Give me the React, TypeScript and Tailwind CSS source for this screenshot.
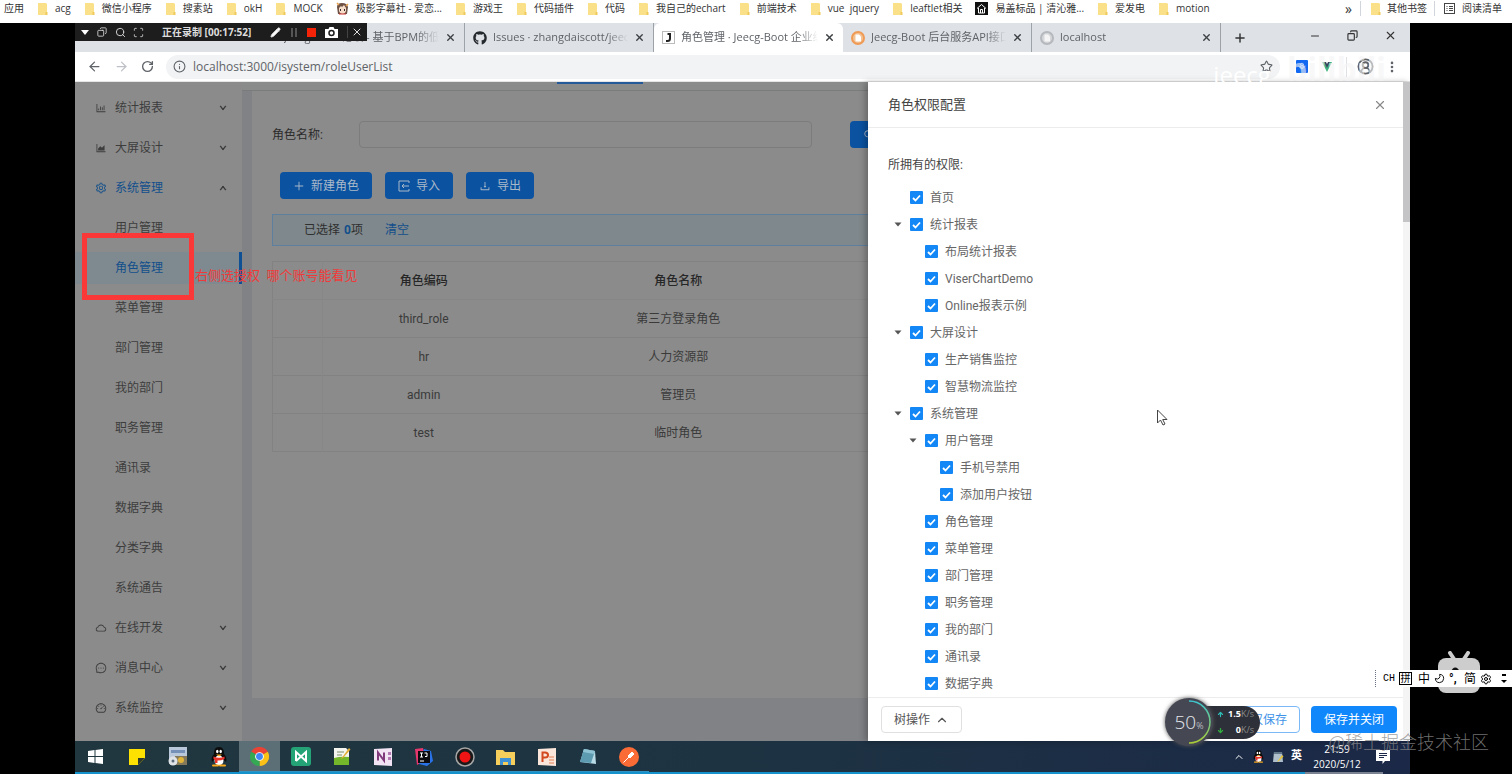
import type { ReactNode } from 'react';
import {
  AiOutlineBarChart, AiOutlineAreaChart, AiOutlineSetting, AiOutlineCloud, AiOutlineMessage, AiOutlineDashboard,
  AiOutlineDownload, AiOutlineSearch, AiOutlinePlus, AiOutlineDown, AiOutlineUp,
} from 'react-icons/ai';
import { FaGithub } from 'react-icons/fa';
import {
  X, Plus, Minus, Copy, ArrowLeft, ArrowRight, RotateCw, Info, Star, EllipsisVertical, ChevronUp, Search,
  Scan, Pencil, Camera, Moon, Settings, ArrowUp, ArrowDown, CircleUserRound, MessageSquareText,
} from 'lucide-react';

type Bookmark = { label: string; icon?: 'face' | 'house' };
type TreeItem = { id: string; label: string; level: 0 | 1 | 2; open?: boolean };

const bookmarks: Bookmark[] = [
  { label: 'acg' },
  { label: '微信小程序' },
  { label: '搜素站' },
  { label: 'okH' },
  { label: 'MOCK' },
  { label: '极影字幕社 - 爱恋...', icon: 'face' },
  { label: '游戏王' },
  { label: '代码插件' },
  { label: '代码' },
  { label: '我自己的echart' },
  { label: '前端技术' },
  { label: 'vue  jquery' },
  { label: 'leaftlet相关' },
  { label: '易盖标品 | 清沁雅...', icon: 'house' },
  { label: '爱发电' },
  { label: 'motion' },
];

const menu: { label: string; icon?: ReactNode; open?: boolean; active?: boolean }[] = [
  { label: '统计报表', icon: <AiOutlineBarChart size={12} /> },
  { label: '大屏设计', icon: <AiOutlineAreaChart size={12} /> },
  { label: '系统管理', icon: <AiOutlineSetting size={12} />, open: true },
  { label: '用户管理' },
  { label: '角色管理', active: true },
  { label: '菜单管理' },
  { label: '部门管理' },
  { label: '我的部门' },
  { label: '职务管理' },
  { label: '通讯录' },
  { label: '数据字典' },
  { label: '分类字典' },
  { label: '系统通告' },
  { label: '在线开发', icon: <AiOutlineCloud size={12} /> },
  { label: '消息中心', icon: <AiOutlineMessage size={12} /> },
  { label: '系统监控', icon: <AiOutlineDashboard size={12} /> },
];

const roles = [
  { code: 'third_role', name: '第三方登录角色' },
  { code: 'hr', name: '人力资源部' },
  { code: 'admin', name: '管理员' },
  { code: 'test', name: '临时角色' },
];

const tree: TreeItem[] = [
  { id: 'home', label: '首页', level: 0 },
  { id: 'report', label: '统计报表', level: 0, open: true },
  { id: 'report-layout', label: '布局统计报表', level: 1 },
  { id: 'report-viser', label: 'ViserChartDemo', level: 1 },
  { id: 'report-online', label: 'Online报表示例', level: 1 },
  { id: 'screen', label: '大屏设计', level: 0, open: true },
  { id: 'screen-sales', label: '生产销售监控', level: 1 },
  { id: 'screen-logistics', label: '智慧物流监控', level: 1 },
  { id: 'system', label: '系统管理', level: 0, open: true },
  { id: 'user', label: '用户管理', level: 1, open: true },
  { id: 'user-phone', label: '手机号禁用', level: 2 },
  { id: 'user-add', label: '添加用户按钮', level: 2 },
  { id: 'role', label: '角色管理', level: 1 },
  { id: 'menu', label: '菜单管理', level: 1 },
  { id: 'depart', label: '部门管理', level: 1 },
  { id: 'position', label: '职务管理', level: 1 },
  { id: 'my-depart', label: '我的部门', level: 1 },
  { id: 'contacts', label: '通讯录', level: 1 },
  { id: 'dict', label: '数据字典', level: 1 },
];

const indent = { 0: 'pl-0', 1: 'pl-[15px]', 2: 'pl-[30px]' };

function Folder() {
  return (
    <svg width="11" height="12" viewBox="0 0 11 12" className="shrink-0">
      <path d="M1 0h8l1 1v11H1z" fill="#fbe08a" />
      <path d="M8.500 9h2V12h-2z" fill="#eec95c" />
    </svg>
  );
}

function FaceIcon() {
  return (
    <svg width="13" height="13" viewBox="0 0 13 13" className="shrink-0">
      <path d="M1 5Q1 1 6 1t6 4l-1 7H2z" fill="#6d5145" />
      <path d="M3 6l2-2 1 1 2-2 2 3v3q-1 3-3.500 3T3 9z" fill="#f6ddca" />
      <path d="M1 1l2 2M12 2l-2 2" stroke="#e9a24c" strokeWidth="1.500" />
      <path d="M4.500 7v2M8.500 7v2" stroke="#3b2a2a" />
      <path d="M3 12h7" stroke="#c33" />
    </svg>
  );
}

function HouseIcon() {
  return (
    <svg width="13" height="13" viewBox="0 0 13 13" className="shrink-0">
      <rect width="13" height="13" fill="#111" />
      <path d="M2 6.500L6.500 2.500 11 6.500M3.500 6v5h6V6M5.500 11V7.500h2V11" fill="none" stroke="#fff" />
    </svg>
  );
}

function BookmarkBar() {
  return (
    <nav className="h-[23px] shrink-0 bg-white pl-1 pr-[10px] pb-[6px] flex items-center text-[10px] text-[#333] whitespace-nowrap font-['Open_Sans','Noto_Sans_CJK_SC',sans-serif]">
      <a href="#apps" className="mr-[13px]">应用</a>
      <div className="flex-1 min-w-0 overflow-hidden flex items-center gap-[13px]">
        {bookmarks.map(b => (
          <a key={b.label} href="#bookmark" className="flex items-center gap-[7px] whitespace-pre">
            {b.icon === 'face' ? <FaceIcon /> : b.icon === 'house' ? <HouseIcon /> : <Folder />}
            {b.label}
          </a>
        ))}
      </div>
      <button className="pr-2 text-sm leading-none">»</button>
      <a href="#other" className="flex items-center gap-[6px] border-l border-gray-300 pl-[9px] pr-[7px]">
        <Folder /> 其他书签
      </a>
      <button className="flex items-center gap-[7px] border-l border-gray-300 pl-[9px]">
        <svg width="11" height="11" viewBox="0 0 11 11" fill="none" stroke="#444">
          <rect x=".5" y=".5" width="10" height="10" />
          <path d="M2.500 3.500h1M2.500 5.500h1M2.500 7.500h1M5 3.500h4M5 5.500h4M5 7.500h4" />
        </svg>
        阅读清单
      </button>
    </nav>
  );
}

function Tab({ icon, title, active }: { icon?: ReactNode; title: string; active?: boolean }) {
  return (
    <div className={`w-[189px] min-w-0 h-full flex items-center gap-[6px] pl-[8px] pr-2 ${active ? 'bg-white rounded-t-md' : 'border-r border-[#9da1a8]'}`}>
      {icon}
      <span className="flex-1 min-w-0 overflow-hidden whitespace-nowrap [mask-image:linear-gradient(to_right,black_85%,transparent)]">{title}</span>
      <button aria-label="关闭标签页"><X size={11} strokeWidth={3} className="text-[#3c4043]" /></button>
    </div>
  );
}

function TabStrip() {
  return (
    <div className="h-[29px] shrink-0 bg-[#dee1e6] pl-[201px] flex items-stretch text-[11px] text-[#5f6368] font-['Open_Sans','Noto_Sans_CJK_SC',sans-serif]">
      <Tab title="Jeecg-Boot 论坛 - 基于BPM的低代码" />
      <Tab title="Issues · zhangdaiscott/jeecg-boot" icon={<FaGithub size={14} className="shrink-0 text-[#24292e]" />} />
      <Tab
        active
        title="角色管理 · Jeecg-Boot 企业级快速开发"
        icon={
          <svg width="13" height="13" viewBox="0 0 13 13" className="shrink-0">
            <rect x=".5" y=".5" width="12" height="12" fill="#fff" stroke="#bbb" />
            <path d="M5.500 3H8v4.500Q8 10 5.500 10H4" fill="none" stroke="#222" strokeWidth="2" />
          </svg>
        }
      />
      <Tab
        title="Jeecg-Boot 后台服务API接口文档"
        icon={
          <svg width="14" height="14" viewBox="0 0 14 14" className="shrink-0">
            <circle cx="7" cy="7" r="6" fill="#f3c294" stroke="#ef9a55" strokeWidth="2" />
            <path d="M4.500 3.500H8l2 2v5H4.500z" fill="#fff" />
          </svg>
        }
      />
      <Tab
        title="localhost"
        icon={
          <svg width="14" height="14" viewBox="0 0 14 14" className="shrink-0">
            <circle cx="7" cy="7" r="6" fill="#d5d7da" stroke="#b5b8bc" strokeWidth="2" />
            <path d="M4.500 3.500H8l2 2v5H4.500z" fill="#f5f5f5" />
          </svg>
        }
      />
      <button aria-label="新标签页" className="px-3 text-[#333]"><Plus size={14} strokeWidth={2.5} /></button>
      <div className="ml-auto flex items-center gap-[26px] pr-[13px] pb-1 text-[#333]">
        <button aria-label="最小化"><Minus size={12} /></button>
        <button aria-label="还原"><Copy size={11} strokeWidth={2.5} className="-scale-x-100" /></button>
        <button aria-label="关闭"><X size={13} /></button>
      </div>
    </div>
  );
}

function AddressBar() {
  return (
    <div className="h-[30px] shrink-0 bg-white border-b border-[#e3e5e6] flex items-center pl-3 pr-[11px] text-[#5f6368]">
      <button aria-label="后退"><ArrowLeft size={15} /></button>
      <button aria-label="前进" className="ml-3 text-[#bdc1c6]"><ArrowRight size={15} /></button>
      <button aria-label="刷新" className="ml-3"><RotateCw size={13} strokeWidth={2.5} /></button>
      <div className="ml-3 flex-1 min-w-0 h-6 rounded-full bg-[#f1f3f4] flex items-center gap-[7px] px-[7px]">
        <Info size={13} />
        <input
          aria-label="网址"
          defaultValue="localhost:3000/isystem/roleUserList"
          className="flex-1 min-w-0 bg-transparent text-[12px] outline-none font-['Open_Sans',sans-serif]"
        />
        <Star size={13} />
      </div>
      <svg width="12" height="13" viewBox="0 0 12 13" className="ml-4">
        <rect width="12" height="13" rx="1" fill="#1268f0" />
        <path d="M6 3l2 1.500L6 6 4 4.500zM2.500 6L6 9l3.500-3M4 6l2 1.500L8 6" fill="none" stroke="#9cc6ff" />
      </svg>
      <svg width="14" height="12" viewBox="0 0 14 12" className="ml-3">
        <path d="M2 1h2l3 5 3-5h2L7 11z" fill="#3fb27f" />
        <path d="M4 1h2l1 2 1-2h2L7 7z" fill="#35495e" />
      </svg>
      <span className="ml-3 mr-[10px] h-5 w-px bg-[#dfe1e4]" />
      <CircleUserRound size={17} strokeWidth={2.5} />
      <button aria-label="菜单" className="ml-[11px]"><EllipsisVertical size={14} strokeWidth={2.5} /></button>
    </div>
  );
}

function RecorderBar() {
  return (
    <div className="absolute left-0 top-0 w-[292px] h-[18px] bg-[#1d1d1d] flex items-center pl-[6px] pr-1 text-[10px] text-[#ddd] whitespace-nowrap">
      <svg width="8" height="5" viewBox="0 0 8 5"><path d="M0 0h8L4 5z" fill="#fff" /></svg>
      <Copy size={10} className="ml-2 -scale-x-100" />
      <Search size={11} className="ml-2" />
      <Scan size={11} className="ml-[7px]" />
      <b className="ml-[18px] font-bold font-['Open_Sans','Noto_Sans_CJK_SC',sans-serif]">正在录制 [00:17:52]</b>
      <div className="ml-auto flex items-center gap-[9px]">
        <Pencil size={11} className="fill-white" />
        <svg width="8" height="9" viewBox="0 0 8 9"><path d="M1 0h2v9H1zM5 0h2v9H5z" fill="#555" /></svg>
        <span className="w-[9px] h-[9px] bg-[#f52409]" />
        <svg width="13" height="11" viewBox="0 0 13 11">
          <path d="M0 2h3.500l1-2h4l1 2H13v9H0z" fill="#fff" />
          <circle cx="6.500" cy="6" r="2.500" fill="none" stroke="#1d1d1d" strokeWidth="1.500" />
        </svg>
        <button aria-label="关闭录制" className="border-l border-[#444] pl-[3px]"><X size={12} /></button>
      </div>
    </div>
  );
}

function Sidebar() {
  return (
    <aside className="w-[167px] shrink-0 bg-[#8b8b8b] pt-[6px]">
      {menu.map(m => (
        <a
          key={m.label}
          href="#menu"
          className={`h-10 flex items-center pl-5 pr-[15px] ${m.active || m.open ? 'text-[#124f8b]' : 'text-[#3d3d3d]'}`}
        >
          {m.active ? (
            <span className="-ml-5 -mr-[15px] h-8 flex-1 flex items-center pl-10 bg-[#7f8a90] border-r-[3px] border-[#0f4f93]">{m.label}</span>
          ) : (
            <>
              <span className="w-5">{m.icon}</span>
              <span className="flex-1">{m.label}</span>
              {m.icon && (m.open
                ? <AiOutlineUp size={8} className="stroke-[80px] stroke-current text-[#333]" />
                : <AiOutlineDown size={8} className="stroke-[80px] stroke-current text-[#333]" />)}
            </>
          )}
        </a>
      ))}
    </aside>
  );
}

function ImportIcon() {
  return (
    <svg width="12" height="12" viewBox="0 0 12 12" fill="none" stroke="currentColor">
      <path d="M11 3V1H1v10h10V9M4 6h7M6 4L4 6l2 2" />
    </svg>
  );
}

function ToolButton({ icon, label }: { icon: ReactNode; label: string }) {
  return (
    <button className="h-[27px] rounded-sm bg-[#0b52a0] text-[#a9b8c9] px-[13px] flex items-center gap-[6px]">
      {icon} {label}
    </button>
  );
}

function RolePage() {
  return (
    <main className="flex-1 min-w-0 overflow-hidden flex flex-col bg-[#808285] whitespace-nowrap">
      <div className="h-[9px] shrink-0 bg-[#8a8b8b] border-b border-[#7a7b7b] pl-[315px]">
        <div className="w-[86px] h-[2px] bg-[#245a9a]" />
      </div>
      <div className="flex-1 ml-[10px] mb-[43px] bg-[#8b8b8b] pl-5 pt-[30px]">
        <form className="flex items-center">
          <label htmlFor="role-name" className="w-[87px] shrink-0 text-[#2b2b2b]">角色名称:</label>
          <input id="role-name" className="flex-1 min-w-0 h-[27px] border border-[#7c7c7c] rounded-sm bg-transparent px-2 outline-none" />
          <button type="button" aria-label="查询" className="ml-[38px] w-[18px] h-[27px] overflow-hidden rounded-l-sm bg-[#0b52a0] text-[#a9b8c9] pl-[13px]">
            <AiOutlineSearch size={12} />
          </button>
        </form>
        <div className="mt-6 pl-2 flex gap-[13px]">
          <ToolButton icon={<AiOutlinePlus size={12} />} label="新建角色" />
          <ToolButton icon={<ImportIcon />} label="导入" />
          <ToolButton icon={<AiOutlineDownload size={12} />} label="导出" />
        </div>
        <div className="mt-[15px] h-8 border border-r-0 border-[#5f7f9f] bg-[#7f888c] flex items-center pl-[31px] text-[#2f2f2f]">
          已选择 <b className="ml-1 text-[#124f8b]">0</b>项
          <a href="#clear" className="ml-[22px] text-[#124f8b]">清空</a>
        </div>
        <table className="mt-[15px] w-full table-fixed text-center text-[#3a3a3a] border-t border-l border-[#828282]">
          <thead>
            <tr className="h-[38px] border-b border-[#868686] text-[#262626]">
              <th className="w-[50px] border-r border-[#878787]"></th>
              <th className="w-[202px] font-medium">角色编码</th>
              <th className="font-medium pr-9">角色名称</th>
            </tr>
          </thead>
          <tbody>
            {roles.map(r => (
              <tr key={r.code} className="h-[38px] border-b border-[#828282]">
                <td className="border-r border-[#878787]"></td>
                <td>{r.code}</td>
                <td className="pr-9">{r.name}</td>
              </tr>
            ))}
          </tbody>
        </table>
      </div>
    </main>
  );
}

function TreeRow({ item }: { item: TreeItem }) {
  return (
    <li className={`h-[27px] flex items-center ${indent[item.level]}`}>
      <span className="w-[22px] flex">
        {item.open && (
          <button aria-label={`收起${item.label}`} className="p-[6px]">
            <svg width="8" height="5" viewBox="0 0 8 5"><path d="M.5.500h7L4 4.500z" fill="#555" /></svg>
          </button>
        )}
      </span>
      <span className="grid place-items-center">
        <input id={item.id} type="checkbox" defaultChecked className="peer col-start-1 row-start-1 appearance-none w-[13px] h-[13px] rounded-[1px] border border-[#ccc] checked:border-0 checked:bg-[#1287f5]" />
        <svg width="9" height="8" viewBox="0 0 9 8" className="col-start-1 row-start-1 pointer-events-none hidden peer-checked:block">
          <path d="M1 4l2.500 2.500L8 1.500" fill="none" stroke="#fff" strokeWidth="1.800" />
        </svg>
      </span>
      <label htmlFor={item.id} className="pl-[7px] text-[#666]">{item.label}</label>
    </li>
  );
}

function PermissionDrawer() {
  return (
    <section className="w-[542px] shrink-0 bg-white flex shadow-[-3px_0_6px_rgba(0,0,0,0.25)] z-10">
      <div className="flex-1 min-w-0 flex flex-col">
        <header className="h-[46px] border-b border-[#ececec] flex items-center justify-between pl-5 pr-4">
          <h1 className="text-[13px] text-[#444]">角色权限配置</h1>
          <button aria-label="关闭抽屉"><X size={14} className="text-[#888]" /></button>
        </header>
        <div className="flex-1 pl-5 pt-7">
          <h2 className="h-[18px] leading-[18px] text-[#444]">所拥有的权限:</h2>
          <ul className="pt-[10px]">
            {tree.map(item => <TreeRow key={item.id} item={item} />)}
          </ul>
        </div>
        <footer className="h-11 border-t border-[#ececec] flex items-center gap-[11px] pl-[13px] pr-[6px]">
          <button className="h-[27px] mr-auto rounded-sm border border-[#e0e0e0] px-3 flex items-center gap-[5px] text-[#555]">
            树操作 <ChevronUp size={14} />
          </button>
          <button className="h-[27px] rounded-sm border border-[#7ab8f8] px-3 text-[#3f93e8]">仅保存</button>
          <button className="h-[27px] rounded-sm bg-[#1087fb] px-[13px] text-white">保存并关闭</button>
        </footer>
      </div>
      <div className="w-[7px] bg-[#f4f4f4]">
        <div className="h-[140px] bg-[#c4c4c6]" />
      </div>
    </section>
  );
}

function QQ({ size }: { size: number }) {
  return (
    <svg width={size} height={size} viewBox="0 0 20 20">
      <path d="M10 0C6 0 5 3 5 7c-2 2-3 5-2 8l2-2c1 5 9 5 10 0l2 2c1-3 0-6-2-8 0-4-1-7-5-7z" fill="#0c0c0c" />
      <ellipse cx="10" cy="13.500" rx="4.500" ry="5" fill="#fff" />
      <ellipse cx="8.300" cy="4.500" rx="1.200" ry="1.800" fill="#fff" />
      <ellipse cx="11.700" cy="4.500" rx="1.200" ry="1.800" fill="#fff" />
      <path d="M7 7.500h6L10 9.500z" fill="#f7a81b" />
      <path d="M4.500 9.500q5.500 2.500 11 0v2.500q-3 1.500-7 1.500V16H6v-3l-1.500-1z" fill="#e8332a" />
      <path d="M4 18.500h5M11 18.500h5" stroke="#f7a81b" strokeWidth="2" strokeLinecap="round" />
    </svg>
  );
}

const apps: { name: string; icon: ReactNode; running?: boolean; active?: boolean }[] = [
  {
    name: '开始',
    icon: <svg width="15" height="15" viewBox="0 0 15 15"><path d="M0 2l6.500-1v6H0zM7.500 1L15 0v7H7.500zM0 8h6.500v6L0 13zM7.500 8H15v7l-7.500-1z" fill="#fff" /></svg>,
  },
  {
    name: '便笺',
    icon: <svg width="16" height="16" viewBox="0 0 16 16"><path d="M0 0h16v9l-7 7H0z" fill="#fde100" /><path d="M9 9h7l-7 7z" fill="#2f3a2c" /></svg>,
  },
  {
    name: '设备',
    icon: (
      <svg width="20" height="19" viewBox="0 0 20 19">
        <rect x="1" width="18" height="14" fill="#b9c8da" /><path d="M3 3h14v3H3z" fill="#7591b8" />
        <rect x="7" y="9" width="12" height="9" fill="#84795a" /><circle cx="13" cy="13" r="3" fill="#e1b43a" />
        <circle cx="5" cy="14" r="4.500" fill="#dfe3e6" /><circle cx="5" cy="14" r="1.500" fill="#5c6c7c" />
      </svg>
    ),
  },
  { name: 'QQ', icon: <QQ size={20} /> },
  {
    name: 'Chrome',
    active: true,
    running: true,
    icon: (
      <svg width="19" height="19" viewBox="0 0 20 20">
        <path d="M10 10L1.300 5A10 10 0 0 1 18.700 5z" fill="#ea4335" />
        <path d="M10 10L18.700 5A10 10 0 0 1 10 20z" fill="#fbc116" />
        <path d="M10 10L10 20A10 10 0 0 1 1.300 5z" fill="#34a853" />
        <circle cx="10" cy="10" r="4.600" fill="#fff" /><circle cx="10" cy="10" r="3.600" fill="#4285f4" />
      </svg>
    ),
  },
  {
    name: 'HBuilder',
    running: true,
    icon: <svg width="20" height="19" viewBox="0 0 20 19"><rect width="20" height="19" rx="3" fill="#24a377" /><path d="M5 14V5l10 9V5L5 14" fill="none" stroke="#fff" strokeWidth="2" /></svg>,
  },
  {
    name: '编辑器',
    running: true,
    icon: <svg width="18" height="19" viewBox="0 0 18 19"><path d="M1 1h12l3 3v14H1z" fill="#f4f5ee" /><path d="M1 11q7-2 15-1v8H1z" fill="#74b72b" /><path d="M4 5h7M4 8h5" stroke="#7a8d6d" /><path d="M16 1l1.500 1.500L10 11l-2 1z" fill="#e4ad30" /></svg>,
  },
  {
    name: 'OneNote',
    running: true,
    icon: <svg width="18" height="18" viewBox="0 0 18 18"><path d="M0 1l18-1v18l-18-1z" fill="#f2e4f3" /><path d="M4 12.500V4.500l6 8V4.500" fill="none" stroke="#80397b" strokeWidth="2" /><path d="M14 4h3v3h-3zM14 9h3v3h-3z" fill="#b577b2" /></svg>,
  },
  {
    name: 'IntelliJ IDEA',
    running: true,
    icon: <svg width="20" height="20" viewBox="0 0 20 20"><path d="M1 2l8-1 3 12-9 5z" fill="#e6376d" /><path d="M10 2l7 2 2 10-6 5-8-2z" fill="#2a72e8" /><rect x="4" y="4" width="12" height="12" fill="#0b0b10" /><path d="M6 6h3M7.500 6v4M6 10h3M10.500 6H13v3.500h-2M6 14h4" stroke="#fff" fill="none" /></svg>,
  },
  {
    name: '录屏',
    running: true,
    icon: <svg width="20" height="20" viewBox="0 0 20 20"><circle cx="10" cy="10" r="9" fill="#191919" stroke="#a6a6a6" strokeWidth="1.500" /><circle cx="10" cy="10" r="5.500" fill="#f11414" /></svg>,
  },
  {
    name: '文件资源管理器',
    running: true,
    icon: <svg width="19" height="16" viewBox="0 0 19 16"><path d="M0 1h7l2 2h10v13H0z" fill="#f5ce5b" /><path d="M4 9h11v7h-3v-3H7v3H4z" fill="#3e91d4" /></svg>,
  },
  {
    name: 'PowerPoint',
    running: true,
    icon: <svg width="18" height="18" viewBox="0 0 18 18"><path d="M0 1l18-1v18l-18-1z" fill="#fbe6dc" /><path d="M4.500 14V4.500H7q3 0 3 2.500T7 9.500H5" fill="none" stroke="#d2491f" strokeWidth="2" /><path d="M11 9h5M11 12h5M11 15h5" stroke="#e58055" /></svg>,
  },
  {
    name: '记事本',
    running: true,
    icon: <svg width="19" height="18" viewBox="0 0 19 18"><path d="M6 1l11 2 1 13-16-2z" fill="#b9dbe6" /><path d="M6 1l11 2-4 12L2 14z" fill="#5d9bb0" /><path d="M6 1l11 2-1 3L5 4z" fill="#8fc3d3" /></svg>,
  },
  {
    name: 'Postman',
    running: true,
    icon: <svg width="20" height="20" viewBox="0 0 20 20"><circle cx="10" cy="10" r="10" fill="#fb6b36" /><path d="M4.500 15.500l6-6M9 9l4-4 2 2-4 4z" stroke="#fff" fill="#fff" /></svg>,
  },
];

function Taskbar() {
  return (
    <footer className="shrink-0 bg-gradient-to-r from-[#20373f] via-[#1d3342] to-[#1b2847]">
      <div className="h-[31px] flex items-stretch">
        {apps.map(a => (
          <button
            key={a.name}
            aria-label={a.name}
            className={`w-[41px] flex items-center justify-center pt-px border-b ${a.active ? 'bg-[#5d6f76]' : ''} ${a.running ? 'border-[#2f93c4]' : 'border-transparent'}`}
          >
            {a.icon}
          </button>
        ))}
        <div className="ml-auto flex items-center gap-[7px] pr-5 text-white text-[11px]">
          <ChevronUp size={12} />
          <QQ size={13} />
          <svg width="12" height="12" viewBox="0 0 12 12"><path d="M2 1h8l1 10H1z" fill="#aebfcb" /><path d="M2 1h8v2H2z" fill="#60788a" /><path d="M10 4l1.500 1.500L7 10l-2 1z" fill="#e4c33a" /></svg>
          <b>英</b>
          <div className="text-center leading-[15px] pt-px w-14 font-['Open_Sans',sans-serif] text-[10px]">
            <div>21:59</div>
            <div>2020/5/12</div>
          </div>
          <svg width="14" height="14" viewBox="0 0 14 14" className="ml-1">
            <path d="M0 0h14v11H9l-2.500 3V11H0z" fill="#fff" />
            <path d="M3 3.500h8M3 5.500h8M3 7.500h5" stroke="#1b2847" />
          </svg>
        </div>
      </div>
      {/* player progress */}
      <div className="h-[2px] mr-[27px] bg-[#7b8291]">
        <div className="h-full w-[94%] bg-[#1592cc]" />
      </div>
    </footer>
  );
}

function SpeedBall() {
  return (
    <div className="absolute right-[252px] bottom-[28px] z-20 flex items-center">
      <div className="relative z-10 w-12 h-12 rounded-full bg-[#454853] shadow-[0_0_4px_#555] flex items-center justify-center text-[#e4e6ea] text-[19px] font-light font-['Open_Sans',sans-serif]">
        50<span className="text-[9px] pt-2">%</span>
        <svg width="48" height="48" viewBox="0 0 48 48" className="absolute inset-0">
          <defs>
            <linearGradient id="load" x1="0" y1="0" x2="0" y2="1">
              <stop offset="0" stopColor="#3cc4cf" />
              <stop offset="1" stopColor="#a9cc35" />
            </linearGradient>
          </defs>
          <path d="M24 3A21 21 0 0 1 24 45" fill="none" stroke="url(#load)" strokeWidth="1.500" />
        </svg>
      </div>
      <div className="-ml-6 w-[71px] h-[33px] rounded-full bg-[#2e3039] pl-7 pr-[6px] flex flex-col justify-center text-[9px] leading-4 text-white font-['Open_Sans',sans-serif]">
        <div className="flex items-center justify-between"><ArrowUp size={7} strokeWidth={4} className="text-[#2dbdb6]" /><span><b>1.5</b><span className="text-[#888]">K/s</span></span></div>
        <div className="flex items-center justify-between"><ArrowDown size={7} strokeWidth={4} className="text-[#31b23f]" /><span><b>0</b><span className="text-[#888]">K/s</span></span></div>
      </div>
    </div>
  );
}

function ImeBar() {
  return (
    <div className="absolute right-0 bottom-[87px] z-20 h-[17px] w-[137px] bg-white border-l border-dotted border-gray-500 flex items-center gap-1 pl-[7px] text-[12px] leading-none text-black whitespace-nowrap">
      <span className="font-['Liberation_Mono',monospace] text-[10px]">CH</span>
      <span className="w-[13px] h-[13px] border border-black text-[10px] leading-[11px] text-center">拼</span>
      <span className="pl-[2px]">中</span>
      <Moon size={11} className="-scale-x-100" />
      <b className="w-[11px]">°,</b>
      <span>简</span>
      <Settings size={12} />
      <span className="flex flex-col gap-[3px] pl-[5px]">
        <svg width="6" height="3" viewBox="0 0 6 3"><path d="M1 0h4v2H1z" /></svg>
        <svg width="6" height="3" viewBox="0 0 6 3"><path d="M0 0h6L3 3z" /></svg>
      </span>
    </div>
  );
}

export default function App() {
  return (
    <div className="relative min-h-screen flex flex-col overflow-hidden bg-black text-[12px] font-['Roboto','Noto_Sans_CJK_SC',sans-serif]">
      <BookmarkBar />
      <div className="relative flex-1 flex flex-col ml-[75px] mr-[102px]">
        <TabStrip />
        <AddressBar />
        <div className="flex-1 flex">
          <Sidebar />
          <RolePage />
          <PermissionDrawer />
        </div>
        <Taskbar />
        <RecorderBar />

        {/* annotation */}
        <div className="absolute left-[7px] top-[210px] w-[112px] h-[67px] border-[5px] border-[#fb3838]" />
        <p className="absolute left-[120px] top-[243px] text-[13px] leading-5 text-[#f03a3a]">右侧选授权&nbsp; 哪个账号能看见</p>

        {/* player watermark */}
        <div className="absolute right-6 top-[28px] z-20 flex items-center gap-4 leading-none text-[#f4f4f6]/60 pointer-events-none font-['Open_Sans',sans-serif]">
          <span className="text-[24px] pt-3 text-white">jeecg</span>
          <b className="text-[32px]">bilibili</b>
        </div>

        <svg width="14" height="18" viewBox="0 0 14 18" className="absolute right-[240px] top-[386px] z-20">
          <path d="M1.500 1v13l3-3 2.500 5 2-1-2.300-4.500H11z" fill="#fff" stroke="#444" />
        </svg>
      </div>

      <svg width="44" height="43" viewBox="0 0 44 43" className="absolute right-[31px] bottom-[80px] z-10">
        <path d="M13 2l4 6M31 2l-4 6" stroke="#cdcdcd" strokeWidth="4" strokeLinecap="round" />
        <rect x="1" y="7" width="42" height="35" rx="8" fill="#cdcdcd" />
        <path d="M15 22q3-8 7 0" fill="none" stroke="#111" strokeWidth="3" />
      </svg>
      <SpeedBall />
      <ImeBar />
      <p className="absolute right-[23px] bottom-[21px] z-20 text-[18px] leading-6 font-light text-[#8a8a8a]/80 font-['Noto_Sans_CJK_SC',sans-serif]">@稀土掘金技术社区</p>
    </div>
  );
}
